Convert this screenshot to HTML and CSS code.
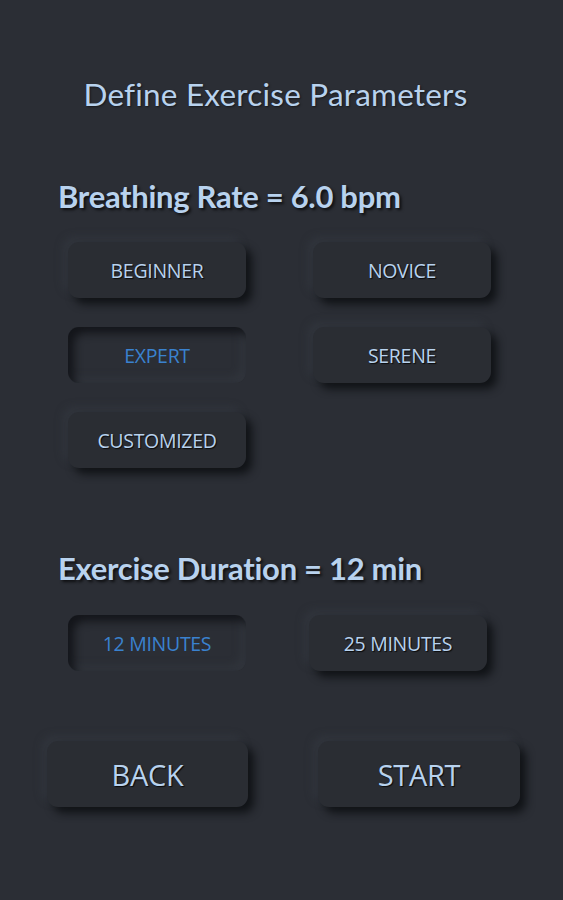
FILE: index.html
```html
<!DOCTYPE html>
<html>
<head>
<meta charset="utf-8">
<link rel="stylesheet" href="styles.css">
</head>
<body>
<main class="screen">
  <h1 class="title">Define Exercise Parameters</h1>
  <h2 class="section-head head-rate">Breathing Rate = 6.0 bpm</h2>
  <div class="grid rate-grid">
    <button class="btn">BEGINNER</button>
    <button class="btn">NOVICE</button>
    <button class="btn pressed">EXPERT</button>
    <button class="btn">SERENE</button>
    <button class="btn">CUSTOMIZED</button>
  </div>
  <h2 class="section-head head-dur">Exercise Duration = 12 min</h2>
  <div class="grid dur-grid">
    <button class="btn pressed">12 MINUTES</button>
    <button class="btn dur-right">25 MINUTES</button>
  </div>
  <div class="actions">
    <button class="btn big">BACK</button>
    <button class="btn big">START</button>
  </div>
</main>
</body>
</html>
```

FILE: styles.css
```css
html, body {
  margin: 0;
  padding: 0;
  background: #2b2e35;
}
.screen {
  width: 563px;
  height: 900px;
  background: #2b2e35;
  font-family: Lato, "Open Sans", sans-serif;
  color: #b8d2ee;
  overflow: hidden;
}
.title {
  margin: 0;
  padding-top: 74px;
  padding-right: 12px;
  font-weight: 400;
  font-size: 31.5px;
  line-height: 40px;
  text-align: center;
  letter-spacing: 0.2px;
  text-shadow: 1px 1px 2px rgba(0,0,0,0.5);
}
.section-head {
  margin: 0;
  padding-left: 58px;
  font-weight: 700;
  font-size: 31px;
  line-height: 40px;
  letter-spacing: -0.3px;
  text-shadow: 2px 2px 3px rgba(0,0,0,0.7);
}
.head-rate { margin-top: 62px; }
.head-dur { margin-top: 80px; }
.grid {
  display: grid;
  grid-template-columns: 178px 178px;
  column-gap: 67px;
  row-gap: 29px;
  padding-left: 68px;
}
.rate-grid { margin-top: 26px; }
.dur-grid { margin-top: 27px; column-gap: 63px; }
.btn {
  height: 56px;
  border: none;
  border-radius: 11px;
  background: #2a2d33;
  color: #b8d2ee;
  font-family: "Open Sans", Lato, sans-serif;
  font-size: 19.5px;
  letter-spacing: -0.3px;
  text-shadow: 1px 1px 1px rgba(0,0,0,0.8);
  box-shadow: 6px 6px 9px rgba(10,12,15,0.8), -5px -5px 9px rgba(60,65,74,0.35);
  padding: 0;
}
.btn.pressed {
  color: #3a82cf;
  text-shadow: none;
  background: #2b2e35;
  box-shadow: inset 6px 6px 8px rgba(12,14,18,0.75), inset -5px -5px 8px rgba(60,65,74,0.35);
}
.actions {
  display: grid;
  grid-template-columns: 201px 202px;
  column-gap: 70px;
  padding-left: 47px;
  margin-top: 70px;
}
.btn.big {
  height: 66px;
  font-size: 29px;
  letter-spacing: -0.3px;
}
```
